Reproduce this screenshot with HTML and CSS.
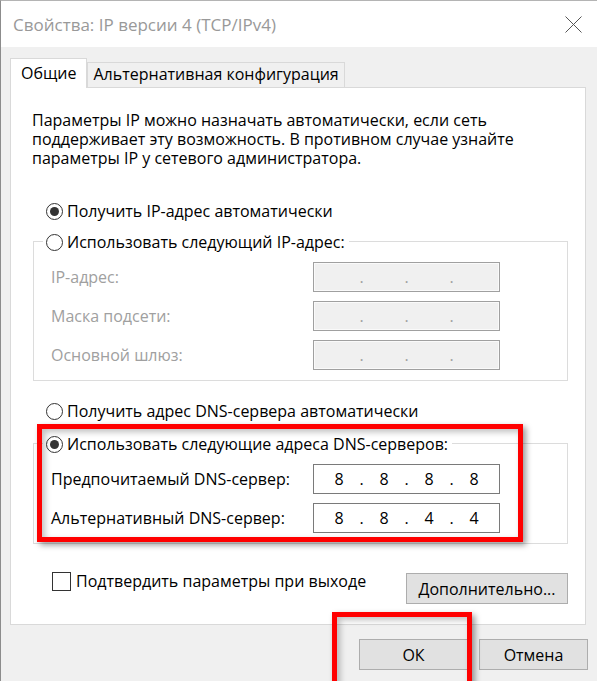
FILE: index.html
```html
<!DOCTYPE html>
<html lang="ru">
<head>
  <meta charset="UTF-8">
  <meta name="viewport" content="width=device-width, initial-scale=1.0">
  <title>Свойства: IP версии 4 (TCP/IPv4)</title>
  <link rel="stylesheet" href="styles.css">
</head>
<body>

  <div class="window">
    <header class="titlebar">
      <span class="title">Свойства: IP версии 4 (TCP/IPv4)</span>
      <svg class="close" width="17" height="17" viewBox="0 0 17 17">
        <path d="M0.5 0.5 L16.5 16.5 M16.5 0.5 L0.5 16.5" stroke="#555" stroke-width="1" fill="none"/>
      </svg>
    </header>

    <div class="content">
      <div class="tabs">
        <div class="tab active">Общие</div>
        <div class="tab">Альтернативная конфигурация</div>
      </div>

      <div class="panel">
        <p class="intro">Параметры IP можно назначать автоматически, если сеть<br>поддерживает эту возможность. В противном случае узнайте<br>параметры IP у сетевого администратора.</p>

        <div class="option"><span class="radio on"></span>Получить IP-адрес автоматически</div>

        <div class="group">
          <div class="legend"><span class="radio"></span>Использовать следующий IP-адрес:</div>
          <div class="rows disabled">
            <div class="row">
              <span>IP-адрес:</span>
              <div class="ip"><span class="oct"></span><span class="sep">.</span><span class="oct"></span><span class="sep">.</span><span class="oct"></span><span class="sep">.</span><span class="oct"></span></div>
            </div>
            <div class="row">
              <span>Маска подсети:</span>
              <div class="ip"><span class="oct"></span><span class="sep">.</span><span class="oct"></span><span class="sep">.</span><span class="oct"></span><span class="sep">.</span><span class="oct"></span></div>
            </div>
            <div class="row">
              <span>Основной шлюз:</span>
              <div class="ip"><span class="oct"></span><span class="sep">.</span><span class="oct"></span><span class="sep">.</span><span class="oct"></span><span class="sep">.</span><span class="oct"></span></div>
            </div>
          </div>
        </div>

        <div class="option gap"><span class="radio"></span>Получить адрес DNS-сервера автоматически</div>

        <div class="group dns">
          <div class="legend"><span class="radio on"></span>Использовать следующие адреса DNS-серверов:</div>
          <div class="rows">
            <div class="row">
              <span>Предпочитаемый DNS-сервер:</span>
              <div class="ip"><span class="oct">8</span><span class="sep">.</span><span class="oct">8</span><span class="sep">.</span><span class="oct">8</span><span class="sep">.</span><span class="oct">8</span></div>
            </div>
            <div class="row">
              <span>Альтернативный DNS-сервер:</span>
              <div class="ip"><span class="oct">8</span><span class="sep">.</span><span class="oct">8</span><span class="sep">.</span><span class="oct">4</span><span class="sep">.</span><span class="oct">4</span></div>
            </div>
          </div>
        </div>

        <div class="panel-footer">
          <div class="check"><span class="box"></span>Подтвердить параметры при выходе</div>
          <button class="btn wide">Дополнительно...</button>
        </div>
      </div>

      <div class="buttons">
        <button class="btn">ОК</button>
        <button class="btn">Отмена</button>
      </div>
    </div>

    <!-- красные рамки поверх диалога -->
    <div class="mark mark-dns"></div>
    <div class="mark mark-ok"></div>
  </div>

</body>
</html>
```

FILE: styles.css
```css
* {
  box-sizing: border-box;
}

body {
  margin: 0;
  background-color: #f0f0f0;
  font-family: "Open Sans", "Segoe UI", sans-serif;
  font-size: 16px;
  color: #000;
}

.window {
  position: relative;
  width: 597px;
  height: 681px;
  overflow: hidden;
  background-color: #f0f0f0;
  border-left: 1px solid #8c8c8c;
  border-top: 1px solid #b4b4b4;
}

.titlebar {
  height: 46px;
  display: flex;
  justify-content: space-between;
  align-items: center;
  padding: 0 15px 0 12px;
  background-color: #fff;
}

.title {
  font-size: 17px;
  color: #999;
}

.close {
  display: block;
}

.content {
  padding: 11px 0 0 9px;
}

.tabs {
  display: flex;
  align-items: flex-end;
  height: 29px;
}

.tab {
  height: 25px;
  line-height: 23px;
  padding: 0 5px;
  background-color: #f0f0f0;
  border: 1px solid #d9d9d9;
  border-bottom: none;
  white-space: nowrap;
}

.tab.active {
  position: relative;
  z-index: 2;
  height: 30px;
  line-height: 28px;
  margin-bottom: -1px;
  padding: 0 10px;
  background-color: #fff;
}

.panel {
  width: 576px;
  background-color: #fff;
  border: 1px solid #d9d9d9;
}

.intro {
  margin: 23px 0 0 21px;
  line-height: 19px;
  white-space: nowrap;
}

.option {
  display: flex;
  align-items: center;
  gap: 4px;
  height: 22px;
  margin: 32px 0 0 35px;
  white-space: nowrap;
}

.option.gap {
  margin-top: 19px;
}

.radio {
  position: relative;
  flex: none;
  width: 17px;
  height: 17px;
  border: 1px solid #333;
  border-radius: 50%;
  background-color: #fff;
}

.radio.on::after {
  content: "";
  position: absolute;
  left: 3px;
  top: 3px;
  width: 9px;
  height: 9px;
  border-radius: 50%;
  background-color: #333;
}

.group {
  margin: 19px 17px 0 22px;
  border: 1px solid #dcdcdc;
}

.group.dns {
  margin-top: 21px;
}

.legend {
  display: flex;
  align-items: center;
  gap: 4px;
  width: fit-content;
  height: 22px;
  margin: -11px 0 0 9px;
  padding: 0 4px 0 3px;
  background-color: #fff;
  white-space: nowrap;
}

.rows {
  display: flex;
  flex-direction: column;
  gap: 9px;
  padding: 9px 0 10px 17px;
}

.row {
  display: grid;
  grid-template-columns: 262px 187px;
  align-items: center;
  height: 30px;
}

.ip {
  display: flex;
  align-items: center;
  height: 30px;
  padding-left: 7px;
  border: 1px solid #7a7a7a;
  background-color: #fff;
}

.oct {
  width: 36px;
  text-align: center;
}

.sep {
  width: 9px;
  text-align: center;
}

.disabled {
  color: #a0a0a0;
}

.disabled .ip {
  border-color: #a0a0a0;
  background-color: #f0f0f0;
  box-shadow: inset 0 0 0 1px #fafafa;
}

.panel-footer {
  display: flex;
  justify-content: space-between;
  align-items: flex-start;
  margin: 29px 17px 20px 41px;
}

.check {
  display: flex;
  align-items: center;
  gap: 5px;
  height: 18px;
  margin-top: -1px;
  white-space: nowrap;
}

.box {
  width: 19px;
  height: 19px;
  border: 1px solid #333;
  background-color: #fff;
}

.btn {
  width: 109px;
  height: 31px;
  padding: 0;
  font-family: inherit;
  font-size: 16px;
  color: #000;
  background-color: #e1e1e1;
  border: 1px solid #adadad;
}

.btn.wide {
  width: 162px;
}

.buttons {
  display: flex;
  justify-content: flex-end;
  gap: 11px;
  margin: 14px 9px 0 0;
}

.mark {
  position: absolute;
  border: 5px solid #ff0000;
  box-shadow: 3px 3px 6px rgba(0,0,0,0.4), inset 3px 3px 6px rgba(0,0,0,0.25);
}

.mark-dns {
  left: 36px;
  top: 423px;
  width: 486px;
  height: 118px;
}

.mark-ok {
  left: 331px;
  top: 611px;
  width: 140px;
  height: 90px;
}
```
